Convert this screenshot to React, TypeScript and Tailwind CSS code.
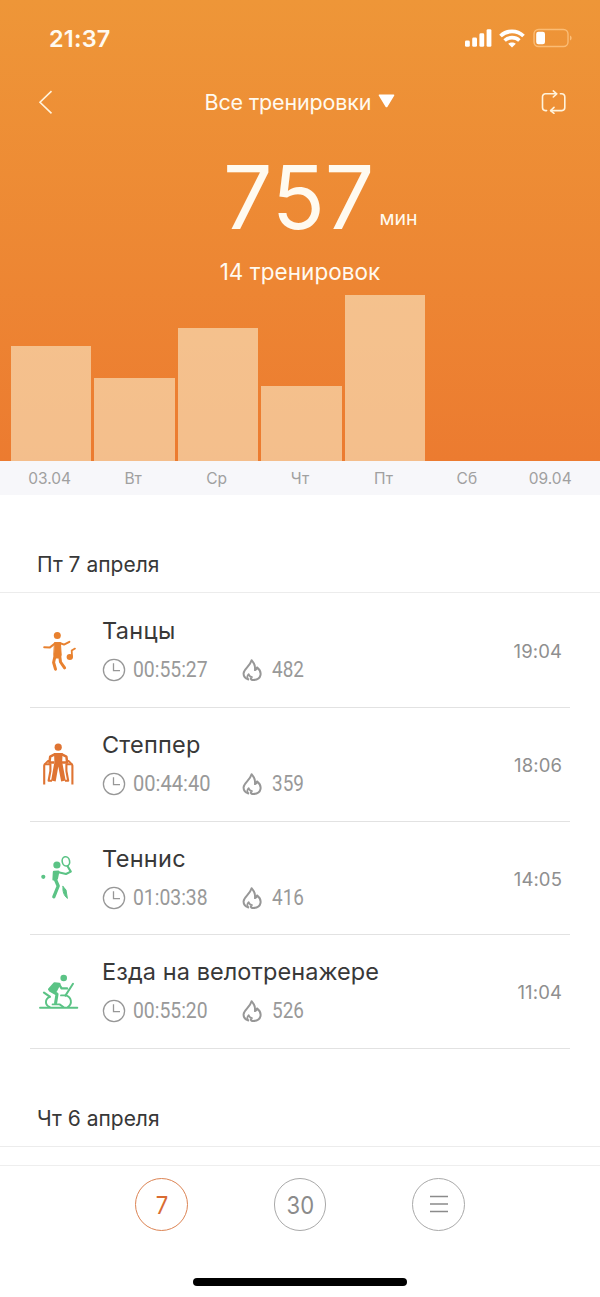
import type { ReactNode } from 'react';

type Workout = {
  title: string;
  titleClass: string;
  duration: string;
  durationClass: string;
  calories: string;
  time: string;
  iconClass: string;
  icon: ReactNode;
};

function SignalIcon() {
  return (
    <svg width="27" height="18" viewBox="0 0 27 18" fill="white">
      <rect x="0" y="11.5" width="4.8" height="6.3" rx="1.4" />
      <rect x="7.2" y="8.5" width="4.8" height="9.3" rx="1.4" />
      <rect x="14.4" y="4.3" width="4.8" height="13.5" rx="1.4" />
      <rect x="21.6" y="0.2" width="4.8" height="17.6" rx="1.4" />
    </svg>
  );
}

function WifiIcon() {
  return (
    <svg width="26" height="19" viewBox="0 0 26 19" fill="none" stroke="white">
      <path d="M1.5 7C8 0.8 18 0.8 24.5 7" strokeWidth="3.8" />
      <path d="M5.6 11.5C9.8 7.7 16.2 7.7 20.4 11.5" strokeWidth="3.6" />
      <path d="M13 18.4L9.2 14.8C11.2 12.9 14.8 12.9 16.8 14.8Z" fill="white" stroke="none" />
    </svg>
  );
}

function BatteryIcon() {
  return (
    <svg width="40" height="20" viewBox="0 0 40 20" fill="none">
      <rect x="1" y="1.5" width="34" height="17" rx="4.5" stroke="#ffc98a" strokeOpacity="0.75" strokeWidth="1.4" />
      <path d="M37 7.5C39.2 8.3 39.2 11.7 37 12.5Z" fill="#ffc98a" fillOpacity="0.8" />
      <rect x="3.2" y="3.7" width="8.8" height="12.6" rx="2.2" fill="white" />
    </svg>
  );
}

function RepeatIcon() {
  return (
    <svg width="26" height="24" viewBox="0 0 26 24" fill="none" stroke="#fff3dc" strokeWidth="1.6" strokeLinecap="round" strokeLinejoin="round">
      <path d="M5.6 20.6H4.5A3 3 0 0 1 1.5 17.6V6.8A3 3 0 0 1 4.5 3.8H15.5" />
      <path d="M12.3 0.9L15.7 3.8L12.3 7" />
      <path d="M19.4 3.8H20.8A3 3 0 0 1 23.8 6.8V17.6A3 3 0 0 1 20.8 20.6H9.8" />
      <path d="M13 17.4L9.6 20.6L13 23.3" />
    </svg>
  );
}

function ClockIcon() {
  return (
    <svg width="24" height="24" viewBox="0 0 24 24" fill="none" stroke="#979797" strokeWidth="1.3">
      <circle cx="12" cy="12" r="10.6" />
      <path d="M11.5 5.2V12.6H18" />
    </svg>
  );
}

function FlameIcon() {
  return (
    <svg width="20" height="24" viewBox="0 0 20 24" fill="none" stroke="#979797" strokeWidth="2" strokeLinejoin="round" strokeLinecap="round">
      <path d="M6.2 21.4C3 20.3 1.4 17.9 1.6 15.2C2 10.8 7.9 8.6 9.6 2.2C12.2 4.8 13.4 7.8 13 12.1C14 11.6 14.7 10.6 15 9.4C18 11.8 19 14.3 18.5 17C17.9 20 15 21.9 11.2 22C9.8 22 9 21.3 8.8 20.2" />
      <path d="M6.2 21.4C4.9 19.6 5.3 17.6 6.7 16.2C7.2 17.9 8.2 18.8 10 19.1" strokeWidth="1.7" />
    </svg>
  );
}

function DanceIcon() {
  return (
    <svg width="60" height="60" viewBox="0 0 60 60" fill="none" stroke="#e8812f" strokeLinecap="round" strokeLinejoin="round">
      <circle cx="27.3" cy="14.4" r="3.5" fill="#e8812f" stroke="none" />
      <path d="M14.2 26.2L20 26.4L25.2 22.2H30.4L34 23.6L39.4 20.8" strokeWidth="2" />
      <path d="M24.8 21.6H30.4L31.2 34L30 37H25L23.9 34Z" fill="#e8812f" strokeWidth="1" />
      <path d="M25.2 34L23.6 41.5L25.5 48.2" strokeWidth="3" />
      <path d="M29.6 34L30.5 41L34.6 46.8" strokeWidth="3" />
      <ellipse cx="39.8" cy="36" rx="3.2" ry="2.9" fill="#e8812f" stroke="none" />
      <path d="M42 35.5L41.7 29.6L45 27.6" strokeWidth="1.8" />
    </svg>
  );
}

function StepperIcon() {
  return (
    <svg width="60" height="60" viewBox="0 0 60 60" fill="none" stroke="#df7433" strokeLinejoin="round">
      <circle cx="28.2" cy="12.2" r="3.6" fill="#df7433" stroke="none" />
      <path d="M25 19.2L20.2 21.6L19.4 27.6H24.5M31.4 19.2L36.4 21.6L37.2 27.6H32" strokeWidth="2.5" />
      <path d="M24 18H32.6L32 31H24.6Z" fill="#df7433" stroke="none" />
      <path d="M26.4 29L23.4 46M30.2 29L33.4 46" strokeWidth="4.6" />
      <path d="M14.2 49.5V30.5Q14.2 29.2 15.5 29.2H20.4V36L18.6 45.8H22M42.4 49.5V30.5Q42.4 29.2 41.1 29.2H36.4V36L38.2 45.8H35" strokeWidth="2.1" />
      <path d="M14.6 29.4L18 26H20M42 29.4L38.6 26H36.6" strokeWidth="1.8" />
    </svg>
  );
}

function TennisIcon() {
  return (
    <svg width="60" height="60" viewBox="0 0 60 60" fill="none" stroke="#5bc385" strokeLinecap="round" strokeLinejoin="round">
      <circle cx="13.3" cy="26.8" r="2.1" fill="#5bc385" stroke="none" />
      <circle cx="26.9" cy="15" r="3.6" fill="#5bc385" stroke="none" />
      <ellipse cx="35.9" cy="11.4" rx="3.7" ry="4.7" strokeWidth="1.6" transform="rotate(-12 35.9 11.4)" />
      <path d="M37.6 16.2L40.8 21.6L36 24L28.5 22.2" strokeWidth="2.1" />
      <path d="M24 22L28.2 21.8L26.8 28.6L23.6 29.4Z" fill="#5bc385" strokeWidth="2.4" />
      <path d="M25.2 29L28.2 36L23.8 46.8" strokeWidth="3.3" />
      <path d="M33 36.5L36 40L37.4 48.4C34 45.6 32.4 41.6 33 36.5Z" fill="#5bc385" strokeWidth="1" />
    </svg>
  );
}

function BikeIcon() {
  return (
    <svg width="60" height="60" viewBox="0 0 60 60" fill="none" stroke="#5bc385" strokeLinecap="round" strokeLinejoin="round">
      <circle cx="33.7" cy="18" r="3.3" fill="#5bc385" stroke="none" />
      <path d="M10 47.7H47.3" strokeWidth="1.9" />
      <path d="M19.2 29.4L24.6 23.4L29.4 24L26 30.8L22 31Z" fill="#5bc385" strokeWidth="2.4" />
      <path d="M29 24.4L31.6 28.4H37" strokeWidth="2.4" />
      <path d="M20.4 30.4L27 34.2L25.6 43" strokeWidth="3.1" />
      <path d="M43 23.8L35.4 35.6" strokeWidth="2" />
      <path d="M14 32.6L19.8 36.6" strokeWidth="2.2" />
      <path d="M19.8 36.8C14.6 39 14.8 45 19.6 47M31 35.4H36C41.6 37.4 42.6 43.6 38 47M22.6 44.4H29.6L33.4 47" strokeWidth="1.9" />
    </svg>
  );
}

const bars = ['h-[115px]', 'h-[83.5px]', 'h-[133.5px]', 'h-[75px]', 'h-[166px]'];

const days = ['03.04', 'Вт', 'Ср', 'Чт', 'Пт', 'Сб', '09.04'];

const workouts: Workout[] = [
  { title: 'Танцы', titleClass: 'tracking-[0.35px]', duration: '00:55:27', durationClass: 'scale-x-[0.9]', calories: '482', time: '19:04', iconClass: 'pt-[27px]', icon: <DanceIcon /> },
  { title: 'Степпер', titleClass: 'tracking-[0.2px]', duration: '00:44:40', durationClass: 'scale-x-[0.935]', calories: '359', time: '18:06', iconClass: 'pt-[27.5px]', icon: <StepperIcon /> },
  { title: 'Теннис', titleClass: 'tracking-[0.3px]', duration: '01:03:38', durationClass: 'scale-x-[0.9]', calories: '416', time: '14:05', iconClass: 'pt-[28.5px]', icon: <TennisIcon /> },
  { title: 'Езда на велотренажере', titleClass: 'tracking-[0.08px]', duration: '00:55:20', durationClass: 'scale-x-[0.9]', calories: '526', time: '11:04', iconClass: 'pt-[25px]', icon: <BikeIcon /> },
];

function WorkoutRow({ workout }: { workout: Workout }) {
  return (
    <li className="mx-[30px] flex h-[113.8px] border-b border-[#e2e2e2]">
      <div className={`w-[72px] shrink-0 ${workout.iconClass}`}>{workout.icon}</div>
      <div className="flex-1 pt-[21px]">
        <div className={`h-8 text-[23.5px] leading-8 whitespace-nowrap text-[#383838] ${workout.titleClass}`}>{workout.title}</div>
        <div className="mt-[11px] flex h-6 items-center font-['Roboto',sans-serif] text-[21.5px] leading-6 font-[450] text-[#999999]">
          <ClockIcon />
          <span className={`ml-[7px] w-[109px] origin-left ${workout.durationClass}`}>{workout.duration}</span>
          <FlameIcon />
          <span className="ml-[10px] origin-left scale-x-[0.88]">{workout.calories}</span>
        </div>
      </div>
      <div className="pt-[45px] pr-[8px] text-[18.5px] leading-6 tracking-[0.1px] text-[#8f8f8f]">{workout.time}</div>
    </li>
  );
}

export default function App() {
  return (
    <div className="flex h-[1297px] w-[600px] flex-col overflow-hidden bg-white font-['Inter',sans-serif]">
      <header className="flex h-[461px] shrink-0 flex-col bg-linear-to-b from-[#ee9638] to-[#ec7b30] text-[#fffaf0]">
        <div className="flex h-[76px] items-center justify-between pr-[27px] pl-[49px]">
          <span className="pt-px text-[23.5px] leading-7 font-semibold tracking-[0.2px]">21:37</span>
          <div className="flex items-center">
            <SignalIcon />
            <span className="ml-[7px]"><WifiIcon /></span>
            <span className="ml-[8px]"><BatteryIcon /></span>
          </div>
        </div>
        <div className="flex h-[52px] items-center justify-between pr-[33px] pb-px pl-[38px]">
          <svg width="28" height="26" viewBox="0 0 28 26" fill="none" stroke="#fff3dc" strokeWidth="1.6">
            <path d="M13.5 2.2L2 13.2L13.5 24.4" />
          </svg>
          <div className="flex items-center gap-[7px] pr-[7px] pb-px">
            <span className="pt-px text-[21.5px] leading-7 tracking-[-0.15px]">Все тренировки</span>
            <svg width="17" height="14" viewBox="0 0 17 14" fill="white">
              <path d="M1.3 0.5H15.7Q17 0.5 16 2L9.5 12.7Q8.5 14 7.5 12.7L1 2Q0 0.5 1.3 0.5Z" />
            </svg>
          </div>
          <RepeatIcon />
        </div>
        <div className="flex h-[125px] items-start pt-[17px] pl-[223px]">
          <span className="text-[87.5px] leading-[104px] font-[385]">757</span>
          <span className="ml-[5px] pt-[61px] text-[19.5px] leading-6">мин</span>
        </div>
        <div className="h-[42px] text-center text-[22.5px] leading-[38px] tracking-[0.05px]">14 тренировок</div>
        <div className="flex h-[166px] items-end gap-[3px] pl-[11px]">
          {bars.map((height, i) => (
            <div key={i} className={`w-[80.4px] bg-[#f8dbb4]/70 ${height}`} />
          ))}
        </div>
      </header>
      <div className="flex h-[34px] shrink-0 items-center bg-[#f7f7fa] px-2 pt-0.5 text-[15.5px] text-[#a0a0a0]">
        {days.map((day) => (
          <span key={day} className="w-[83.5px] text-center">{day}</span>
        ))}
      </div>
      <main className="h-[670px] shrink-0 overflow-hidden">
        <h2 className="h-[98px] border-b border-[#ececec] pt-[56px] pl-[37px] text-[21px] leading-7 text-[#383838]">Пт 7 апреля</h2>
        <ul className="mt-px">
          {workouts.map((workout) => (
            <WorkoutRow key={workout.title} workout={workout} />
          ))}
        </ul>
        <h2 className="h-[98px] border-b border-[#ececec] pt-[56px] pl-[37px] text-[21px] leading-7 text-[#383838]">Чт 6 апреля</h2>
      </main>
      <nav className="flex flex-1 flex-col items-center border-t border-[#eeeeee]">
        <div className="mt-3 flex gap-[86px] text-[24.5px]">
          <button className="flex size-[52.5px] items-center justify-center rounded-full border border-[#dc8454] text-[#d96c32]">
            <span className="scale-x-[0.9] pt-0.5 font-[400]">7</span>
          </button>
          <button className="flex size-[52.5px] items-center justify-center rounded-full border border-[#a9a9a9] text-[#8b8b8b]">
            <span className="scale-x-[0.9] pt-0.5 font-[400]">30</span>
          </button>
          <button className="flex size-[52.5px] items-center justify-center rounded-full border border-[#a9a9a9]">
            <svg width="18" height="18" viewBox="0 0 18 18" stroke="#8b8b8b" strokeWidth="1.4">
              <path d="M0 1.5H18M0 9H18M0 16.5H18" />
            </svg>
          </button>
        </div>
        <div className="mt-[47px] h-2 w-[214px] rounded-full bg-black" />
      </nav>
    </div>
  );
}
